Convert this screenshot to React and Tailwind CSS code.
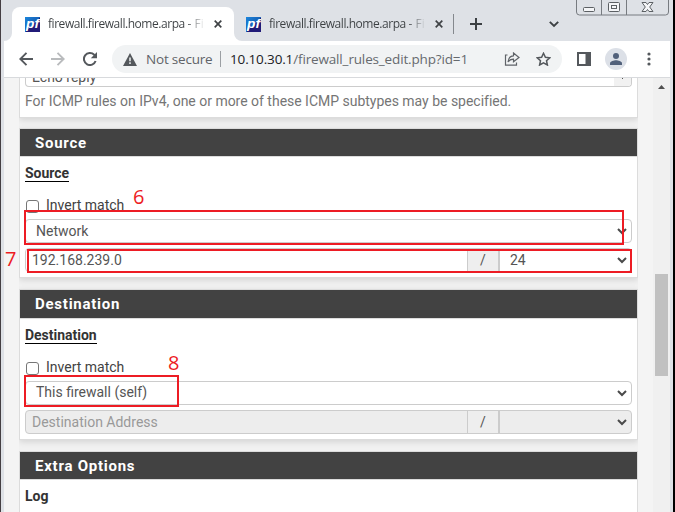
import React from "react";

const UI = "font-['Open_Sans','Noto_Sans',sans-serif]";

function Favicon() {
  return (
    <svg className="h-[15px] w-[15px] shrink-0" viewBox="0 0 15 15">
      <defs>
        <linearGradient id="pf" x1="0" y1="0" x2="1" y2="1">
          <stop offset="0" stopColor="#1b86dc" />
          <stop offset=".5" stopColor="#1762b8" />
          <stop offset=".52" stopColor="#211b78" />
          <stop offset="1" stopColor="#211b78" />
        </linearGradient>
      </defs>
      <rect width="15" height="15" fill="url(#pf)" />
      <text x="1" y="10.5" fontFamily="Liberation Sans, sans-serif" fontSize="12" fontWeight="bold" fontStyle="italic" fill="#fff" textLength="13" lengthAdjust="spacingAndGlyphs">pf</text>
    </svg>
  );
}

function TabTitle() {
  return (
    <span className={`${UI} ml-2 w-[157px] shrink-0 whitespace-nowrap bg-gradient-to-r from-[#3c4043] from-88% to-transparent bg-clip-text text-[12px] leading-4 tracking-[-0.45px] text-transparent`}>
      firewall.firewall.home.arpa <span className="tracking-normal">- Fi</span>
    </span>
  );
}

function Close() {
  return (
    <svg className="ml-[9px] h-2 w-2 shrink-0" viewBox="0 0 8 8">
      <path d="M.7.7l6.6 6.6M7.3.7L.7 7.3" stroke="#3f4245" strokeWidth="1.7" />
    </svg>
  );
}

function Chevron() {
  return (
    <svg className="h-[7px] w-[10px] shrink-0" viewBox="0 0 10 7">
      <path d="M1 1l4 4 4-4" fill="none" stroke="#4a4a4a" strokeWidth="2" />
    </svg>
  );
}

function TabStrip() {
  return (
    <div className="flex h-[41px] items-start bg-[#dee1e6]">
      <div className="relative ml-2 mt-[7px] flex h-[34px] w-[222px] items-center rounded-t-lg bg-white pl-[13px]">
        <svg className="absolute -left-2 bottom-0 h-2 w-2" viewBox="0 0 8 8"><path d="M8 0v8H0a8 8 0 0 0 8-8" fill="#fff" /></svg>
        <svg className="absolute -right-2 bottom-0 h-2 w-2" viewBox="0 0 8 8"><path d="M0 0v8h8a8 8 0 0 1-8-8" fill="#fff" /></svg>
        <Favicon />
        <TabTitle />
        <Close />
      </div>
      <div className="mt-[7px] flex h-[34px] w-[206px] items-center pl-3">
        <Favicon />
        <TabTitle />
        <Close />
      </div>
      <div className="ml-[13px] mt-[14px] h-5 w-px bg-[#84888d]" />
      <svg className="ml-4 mt-[18px] h-3 w-3" viewBox="0 0 12 12"><path d="M6 0v12M0 6h12" stroke="#3c4043" strokeWidth="2" /></svg>
      <svg className="ml-[67px] mt-[21px] h-[7px] w-[10px]" viewBox="0 0 10 7"><path d="M.8.8L5 5 9.200.8" fill="none" stroke="#3c4043" strokeWidth="1.9" /></svg>
      <svg className="ml-[17px] h-4 w-[93px]" viewBox="0 0 93 16">
        <path d="M.5-3v15a3 3 0 0 0 3 3h86a3 3 0 0 0 3-3V-3M25.500 0v15M50.500 0v15" fill="none" stroke="#777b80" />
        <g fill="#f4f5f7" stroke="#5c6064">
          <rect x="7.500" y="7.500" width="11" height="4" rx="1" />
          <rect x="32.500" y="2.500" width="11" height="9" rx="1" />
          <rect x="35.500" y="5.500" width="5" height="3" />
          <path d="M66 2.500h4l1.500 2 1.500-2h4L73.700 7l3.300 4.500h-4l-1.500-2-1.500 2h-4L69.300 7z" />
        </g>
      </svg>
    </div>
  );
}

function Toolbar() {
  return (
    <div className="flex h-[37px] shrink-0 items-center border-b border-[#d8dadd] bg-white">
      <svg className="ml-[15px] h-[14px] w-[14px]" viewBox="0 0 14 14"><path d="M14 7H1.500M7.500.8L1.300 7l6.200 6.200" fill="none" stroke="#54585c" strokeWidth="1.9" /></svg>
      <svg className="ml-[18px] h-[14px] w-[14px]" viewBox="0 0 14 14"><path d="M0 7h12.500M6.500.8L12.700 7l-6.200 6.200" fill="none" stroke="#b9bbbd" strokeWidth="1.9" /></svg>
      <svg className="ml-[18px] h-[14px] w-[14px]" viewBox="0 0 14 14"><path d="M12.600 9A6 6 0 1 1 11.200 2.800L12.500 4" fill="none" stroke="#54585c" strokeWidth="2" /><path d="M14 0v6.200H7.800z" fill="#54585c" /></svg>
      <div className={`${UI} ml-[15px] flex h-7 w-[450px] items-center rounded-full bg-[#f1f3f4] text-[14px] leading-5`}>
        <svg className="ml-[11px] h-[13px] w-[14px] shrink-0" viewBox="0 0 14 13"><path d="M7 0l7 13H0z" fill="#54585c" /><path d="M7 4.500v3.700M7 9.300v1.700" stroke="#f1f3f4" strokeWidth="1.5" /></svg>
        <span className="ml-[9px] w-[74px] shrink-0 whitespace-nowrap text-[13.500px] tracking-[-0.2px] text-[#5f6368]">Not secure</span>
        <span className="h-4 w-px shrink-0 bg-[#9b9fa3]" />
        <span className="ml-[9px] w-[274px] shrink-0 whitespace-nowrap text-[13.500px] tracking-[-0.15px] text-[#666a6e]"><span className="text-[#202124]">10.10.30.1</span>/firewall_rules_edit.php?id=1</span>
        <svg className="h-[14px] w-[16px] shrink-0" viewBox="0 0 16 14"><path d="M3.500 3H1.500v10.200h11V10.500M9.500 1l5.500 4.500-5.500 4.300V7.200C7 7.200 5.300 8 4 10c.3-3.300 2-6 5.500-6.200z" fill="none" stroke="#5f6368" strokeWidth="1.200" /></svg>
        <svg className="ml-4 h-[14px] w-[15px] shrink-0" viewBox="0 0 15 14"><path d="M7.500 1.300l1.900 4 4.300.5-3.200 2.900.9 4.300-3.900-2.200L3.600 13l.9-4.300L1.300 5.800l4.300-.5z" fill="none" stroke="#54585c" strokeWidth="1.500" /></svg>
      </div>
      <svg className="ml-[15px] h-[14px] w-[14px]" viewBox="0 0 14 14"><path fillRule="evenodd" d="M0 0h14v14H0zM2 2v10h6.500V2z" fill="#54585c" /></svg>
      <div className="ml-[14px] flex h-[22px] w-[22px] items-center justify-center rounded-full bg-[#dce0e7]">
        <svg className="h-3 w-3" viewBox="0 0 12 12"><circle cx="6" cy="3" r="3" fill="#51607a" /><path d="M0 12v-1.700C0 8.300 4 7.300 6 7.300s6 1 6 3V12z" fill="#51607a" /></svg>
      </div>
      <svg className="ml-5 h-[14px] w-1" viewBox="0 0 4 14"><g fill="#54585c"><circle cx="2" cy="2" r="1.600" /><circle cx="2" cy="7" r="1.600" /><circle cx="2" cy="12" r="1.600" /></g></svg>
    </div>
  );
}

function Header({ title, tall }) {
  return (
    <div className={`${tall ? "h-[29px]" : "h-7"} flex shrink-0 items-center border-b border-[#dcdcdc] bg-[#424242] pl-[15px] text-[15px] font-bold leading-5 tracking-[0.75px] text-white`}>
      {title}
    </div>
  );
}

function Address({ value, suffix, disabled }) {
  const tone = disabled ? "bg-[#ededed] text-[#999]" : "bg-white text-[#555]";
  return (
    <div className={`mt-[5px] flex h-6 overflow-hidden rounded border border-[#ccc] text-[14px] leading-[22px] ${tone}`}>
      <div className="w-[441px] pl-[6px]">{value}</div>
      <div className="w-[33px] border-x border-r-2 border-[#ccc] bg-[#eee] text-center text-[#555]">/</div>
      <div className="flex flex-1 items-center justify-between pl-[10px] pr-1"><span>{suffix}</span><Chevron /></div>
    </div>
  );
}

function EndpointPanel({ title, selected, value, suffix, disabled, placement, tall }) {
  return (
    <section className={`${placement} flex shrink-0 flex-col border border-[#dcdcdc] bg-white shadow-[0_2px_6px_rgba(0,0,0,0.12)]`}>
      <Header title={title} tall={tall} />
      <div className="flex flex-col px-[5px] pt-2">
        <span className="h-[17px] self-start whitespace-nowrap border-b border-black text-[14px] font-bold leading-4 tracking-[-0.02px] text-[#333]">{title}</span>
        <div className="mt-[15px] flex h-[17px] items-start pl-px text-[14px] leading-4 text-[#424242]">
          <span className="mt-[3px] h-[13px] w-[13px] rounded-[3px] border border-[#767676] bg-white" />
          <span className="ml-[7px]">Invert match</span>
        </div>
        <div className="mt-[5px] flex h-6 items-center justify-between rounded border border-[#ccc] pl-[10px] pr-1 text-[14px] leading-[22px] text-[#555]">
          <span className={tall ? "pb-0.5" : ""}>{selected}</span><Chevron />
        </div>
        <Address value={value} suffix={suffix} disabled={disabled} />
      </div>
    </section>
  );
}

function Page() {
  return (
    <div className="flex min-h-0 flex-1 bg-[#f4f4f4] font-[Roboto,sans-serif]">
      <div className="ml-[15px] flex w-[619px] shrink-0 flex-col overflow-hidden bg-[#f1f1f1]">
        <section className="h-10 shrink-0 border-x border-b border-[#dcdcdc] bg-white px-[5px] shadow-[0_2px_6px_rgba(0,0,0,0.12)]">
          <div className="flex h-[9px] justify-between overflow-hidden rounded-b border-x border-b border-[#ccc] pl-[6px] text-[14px] leading-4 text-[#555]">
            <span className="-mt-[9px]">Echo reply</span>
            <span className="flex h-2 w-[17px] items-start justify-center bg-[#f1f1f1]"><span className="h-px w-px bg-[#555]" /></span>
          </div>
          <p className="mt-[6px] whitespace-nowrap text-[14px] leading-4 tracking-[-0.015px] text-[#757575]">For ICMP rules on IPv4, one or more of these ICMP subtypes may be specified.</p>
        </section>
        <EndpointPanel placement="mt-[10px] h-[150px]" title="Source" selected="Network" value="192.168.239.0" suffix="24" />
        <EndpointPanel placement="mt-[11px] h-[151px]" tall title="Destination" selected="This firewall (self)" value="Destination Address" suffix="" disabled />
        <section className="mt-[11px] h-[100px] shrink-0 border border-[#dcdcdc] bg-white">
          <Header title="Extra Options" />
          <p className="pl-[5px] pt-[7px] text-[14px] font-bold leading-[18px] text-[#333]">Log</p>
        </section>
      </div>
      <div className="ml-[15px] flex w-[17px] flex-col items-center bg-[#f0f0f0]">
        <svg className="mt-[7px] h-1 w-[7px] shrink-0" viewBox="0 0 7 4"><path d="M0 4h7L3.500 0z" fill="#505050" /></svg>
        <div className="mt-[185px] h-[102px] w-[13px] shrink-0 bg-[#c1c1c1]" />
      </div>
    </div>
  );
}

export default function App() {
  return (
    <div className="relative flex h-[512px] w-[675px] flex-col overflow-hidden border-l border-r-2 border-l-[#453f43] border-r-black bg-[#dee1e6]">
      <div className="ml-[3px] mr-[3px] flex h-full flex-col">
        <TabStrip />
        <Toolbar />
        <Page />
      </div>
      <div className="absolute left-[23px] top-[210px] h-[35px] w-[600px] border-2 border-[#ed1c24]" />
      <div className="absolute left-[26px] top-[249px] h-6 w-[605px] border-2 border-[#ed1c24]" />
      <div className="absolute left-[23px] top-[375px] h-8 w-[155px] border-2 border-[#ed1c24]" />
      <div className={`${UI} text-[20px] font-normal leading-5 text-[#ed1c24]`}>
        <span className="absolute left-[132px] top-[187px]">6</span>
        <span className="absolute left-[4px] top-[249px]">7</span>
        <span className="absolute left-[167px] top-[353px]">8</span>
      </div>
    </div>
  );
}
